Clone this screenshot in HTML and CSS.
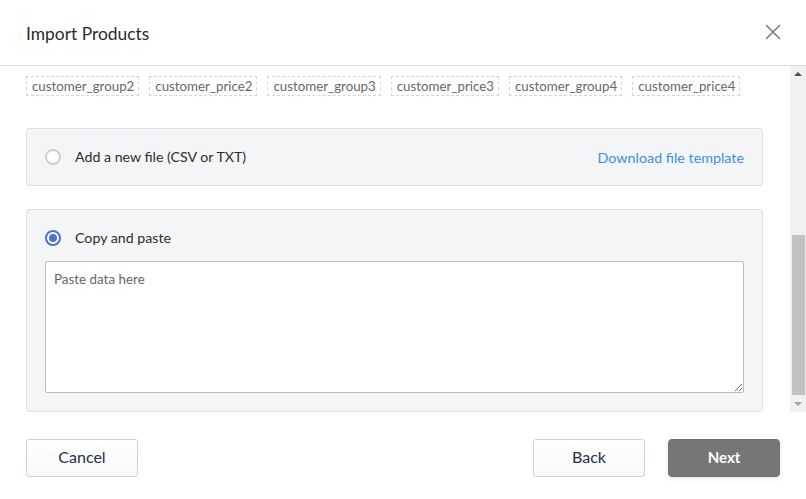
FILE: index.html
```html
<!DOCTYPE html>
<html lang="en">
<head>
<meta charset="utf-8">
<title>Import Products</title>
<link rel="stylesheet" href="styles.css">
</head>
<body>
<div class="modal">
  <header class="modal-header">
    <h1 class="modal-title">Import Products</h1>
    <button class="close-btn" aria-label="Close">
      <svg width="16" height="16" viewBox="0 0 16 16"><path d="M1 1 L15 15 M15 1 L1 15" stroke="#7a7a7a" stroke-width="1.5" fill="none"/></svg>
    </button>
  </header>
  <div class="modal-body">
    <div class="scroll-content">
      <div class="tags">
        <span class="tag">customer_group2</span>
        <span class="tag">customer_price2</span>
        <span class="tag">customer_group3</span>
        <span class="tag">customer_price3</span>
        <span class="tag">customer_group4</span>
        <span class="tag">customer_price4</span>
      </div>
      <div class="card card-file">
        <label class="option"><span class="radio"></span><span class="option-label">Add a new file (CSV or TXT)</span></label>
        <a class="link" href="#">Download file template</a>
      </div>
      <div class="card card-paste">
        <label class="option"><span class="radio checked"></span><span class="option-label">Copy and paste</span></label>
        <textarea class="paste-area" placeholder="Paste data here"></textarea>
      </div>
    </div>
    <div class="scrollbar">
      <div class="sb-arrow up"></div>
      <div class="sb-track"><div class="sb-thumb"></div></div>
      <div class="sb-arrow down"></div>
    </div>
  </div>
  <footer class="modal-footer">
    <button class="btn btn-default">Cancel</button>
    <div class="footer-right">
      <button class="btn btn-default">Back</button>
      <button class="btn btn-primary">Next</button>
    </div>
  </footer>
</div>
</body>
</html>
```
FILE: styles.css
```css
* { box-sizing: border-box; }
html, body { margin: 0; padding: 0; background: #fff; }
body { font-family: Lato, "Open Sans", sans-serif; color: #333; }

.modal { width: 806px; height: 499px; display: flex; flex-direction: column; background: #fff; }

.modal-header {
  height: 66px;
  border-bottom: 1px solid #dcdcdc;
  display: flex;
  align-items: center;
  justify-content: space-between;
  padding: 0 26px;
  flex-shrink: 0;
}
.modal-title { margin: 0; font-size: 17.4px; font-weight: 400; color: #2b2b2b; padding-top: 2px; }
.close-btn { border: 0; background: none; padding: 0; width: 16px; height: 16px; margin-right: -1px; margin-top: -1px; cursor: pointer; display: block; }
.close-btn svg { display: block; }

.modal-body { height: 346px; display: flex; flex-shrink: 0; }
.scroll-content { flex: 1; overflow: hidden; padding: 10px 27px 0 26px; }

.tags { display: flex; gap: 10px; }
.tag {
  border: 1px dashed #d6d6d6;
  font-size: 13.3px;
  line-height: 18px;
  padding: 0 4px 1px 5px;
  height: 20px;
  color: #686868;
}

.card {
  background: #f4f5f7;
  border: 1px solid #dde0e4;
  border-radius: 3px;
}
.card-file {
  margin-top: 32px;
  height: 58px;
  display: flex;
  align-items: center;
  justify-content: space-between;
  padding: 0 18px 0 18px;
}
.card-paste {
  margin-top: 23px;
  padding: 19px 18px 18px 18px;
}
.option { display: flex; align-items: center; gap: 14px; }
.option-label { font-size: 14.2px; color: #2d2d2d; line-height: 18px; }
.radio {
  width: 16px; height: 16px;
  border: 2px solid #cfcfcf;
  border-radius: 50%;
  background: #fff;
  display: inline-block;
  position: relative;
  flex-shrink: 0;
}
.radio.checked { border-color: #4f72cf; }
.radio.checked::after {
  content: "";
  position: absolute;
  left: 2px; top: 2px;
  width: 8px; height: 8px;
  border-radius: 50%;
  background: #4f72cf;
}
.link { color: #3d8fe3; font-size: 14.3px; text-decoration: none; }

.paste-area {
  display: block;
  margin-top: 14px;
  width: 100%;
  height: 132px;
  border: 1px solid #bdbdbd;
  border-radius: 2px;
  background: #fff;
  padding: 9px 8px 8px 8px;
  font-family: Lato, "Open Sans", sans-serif;
  font-size: 13.4px;
  color: #333;
  resize: vertical;
}
.paste-area::placeholder { color: #666; }

.scrollbar { width: 16px; background: #f1f1f1; display: flex; flex-direction: column; }
.sb-arrow { height: 16px; position: relative; }
.sb-arrow::after {
  content: "";
  position: absolute;
  left: 4px;
  border-left: 4px solid transparent;
  border-right: 4px solid transparent;
}
.sb-arrow.up::after { top: 6px; border-bottom: 4px solid #505050; }
.sb-arrow.down::after { top: 6px; border-top: 4px solid #a3a3a3; }
.sb-track { flex: 1; padding: 0 1px 0 2px; }
.sb-thumb { margin-top: 153px; height: 160px; background: #c1c1c1; }

.modal-footer {
  flex: 1;
  display: flex;
  justify-content: space-between;
  align-items: flex-start;
  padding: 27px 26px 0 26px;
}
.footer-right { display: flex; gap: 23px; }
.btn {
  width: 112px;
  height: 38px;
  border-radius: 3px;
  font-family: Lato, "Open Sans", sans-serif;
  font-size: 16px;
  line-height: 20px;
  padding: 0 0 3px 0;
  cursor: pointer;
}
.btn-default {
  background: linear-gradient(#ffffff, #f6f8fa);
  border: 1px solid #ccd2da;
  color: #23304a;
}
.btn-primary {
  background: #767676;
  border: 1px solid #707070;
  color: #fff;
  font-weight: 700;
  font-size: 15px;
  padding-bottom: 2px;
  border-radius: 4px;
  box-shadow: 0 2px 6px rgba(0,0,0,0.08);
}
```
